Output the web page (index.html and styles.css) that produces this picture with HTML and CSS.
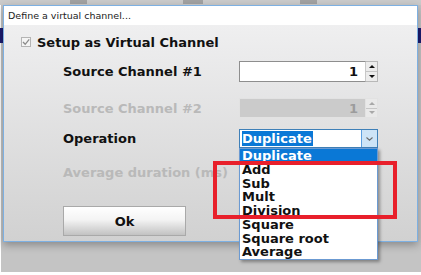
FILE: index.html
```html
<!DOCTYPE html>
<html lang="en">
<head>
  <meta charset="UTF-8">
  <title>Define a virtual channel</title>
  <link rel="stylesheet" href="styles.css">
</head>
<body>
<div class="screen">
  <div class="backdrop-top"></div>

  <div class="dialog">
    <div class="titlebar">Define a virtual channel...</div>
    <div class="client">
      <label class="check-row">
        <span class="checkbox">
          <svg width="10" height="10" viewBox="0 0 10 10"><polyline points="2,5 4.2,7.3 8.2,2.4" fill="none" stroke="#8a8a8a" stroke-width="1.3"/></svg>
        </span>
        Setup as Virtual Channel
      </label>

      <div class="field row-src1">
        <span class="label">Source Channel #1</span>
        <div class="spin">
          <div class="spin-text">1</div>
          <div class="spin-btns">
            <span class="arrow-up"></span>
            <span class="arrow-down"></span>
          </div>
        </div>
      </div>

      <div class="field row-src2 disabled">
        <span class="label">Source Channel #2</span>
        <div class="spin">
          <div class="spin-text">1</div>
          <div class="spin-btns">
            <span class="arrow-up"></span>
            <span class="arrow-down"></span>
          </div>
        </div>
      </div>

      <div class="field row-op">
        <span class="label">Operation</span>
        <div class="combo">
          <div class="combo-text"><span class="sel">Duplicate</span></div>
          <div class="combo-btn">
            <svg width="9" height="6" viewBox="0 0 9 6"><polyline points="1.5,1.5 4.5,4.2 7.5,1.5" fill="none" stroke="#6a6a6a" stroke-width="1.1"/></svg>
          </div>
        </div>
      </div>

      <div class="field row-avg disabled">
        <span class="label">Average duration (ms)</span>
      </div>

      <button class="ok-btn">Ok</button>
    </div>
  </div>

  <!-- open dropdown of the Operation combo -->
  <ul class="droplist">
    <li class="active">Duplicate</li>
    <li>Add</li>
    <li>Sub</li>
    <li>Mult</li>
    <li>Division</li>
    <li>Square</li>
    <li>Square root</li>
    <li>Average</li>
  </ul>

  <!-- red annotation frame -->
  <div class="mark-box"></div>
</div>
</body>
</html>
```

FILE: styles.css
```css
body {
  margin: 0;
  font-family: "DejaVu Sans", sans-serif;
}

.screen {
  position: relative;
  width: 421px;
  height: 275px;
  overflow: hidden;
  background:
    linear-gradient(#1b1b70, #1b1b70) 0 28px / 421px 15px no-repeat,
    linear-gradient(#ffffff, #ffffff) 0 272px / 421px 3px no-repeat,
    linear-gradient(#ffffff, #ffffff) 0 0 / 1px 275px no-repeat,
    #c4c4c4;
}

.backdrop-top {
  height: 5px;
  background:
    linear-gradient(#a2a2a2, #a2a2a2) 70px 0 / 17px 4px no-repeat,
    linear-gradient(#a2a2a2, #a2a2a2) 183px 0 / 20px 4px no-repeat,
    linear-gradient(#a2a2a2, #a2a2a2) 300px 0 / 17px 4px no-repeat,
    #cbcbcb;
}

.dialog {
  margin-left: 3px;
  width: 415px;
  box-sizing: border-box;
  border: 1px solid #7db0e2;
  box-shadow: 0 3px 8px rgba(0, 0, 0, 0.3);
}

.titlebar {
  height: 19px;
  background: #ffffff;
  font-size: 9.5px;
  line-height: 19px;
  padding-left: 4px;
  color: #222;
}

.client {
  height: 216px;
  box-sizing: border-box;
  background: linear-gradient(#efeff0, #d1d1d1);
  display: flex;
  flex-direction: column;
  font-size: 13px;
  font-weight: bold;
  color: #111;
}

.check-row {
  display: flex;
  align-items: center;
  gap: 6px;
  height: 12px;
  margin-top: 11px;
  padding-left: 17px;
}

.checkbox {
  width: 10px;
  height: 10px;
  box-sizing: border-box;
  border: 1px solid #b4b4b4;
  background: #f4f4f4;
  display: flex;
}

.checkbox svg {
  margin: -1px;
}

.field {
  display: flex;
  align-items: center;
  padding-left: 59px;
}

.label {
  width: 176px;
  white-space: nowrap;
}

.row-src1 { margin-top: 13px; height: 21px; }
.row-src2 { margin-top: 16px; height: 20px; }
.row-op   { margin-top: 11px; height: 19px; }
.row-avg  { margin-top: 14px; height: 20px; }

.disabled .label {
  color: #b9b9b9;
}

.spin {
  display: flex;
  height: 100%;
}

.spin-text {
  width: 127px;
  box-sizing: border-box;
  border: 1px solid #8e8e8e;
  border-right-color: #c8c8c8;
  background: #ffffff;
  text-align: right;
  padding-right: 7px;
  line-height: 19px;
}

.spin-btns {
  width: 11px;
  display: flex;
  flex-direction: column;
  border: 1px solid #b8b8b8;
  border-left: none;
  background: #ececec;
}

.spin-btns span {
  flex: 1;
  display: flex;
  align-items: center;
  justify-content: center;
}

.arrow-up {
  border-bottom: 1px solid #c6c6c6;
}

.arrow-up::before,
.arrow-down::before {
  content: "";
  border-left: 3px solid transparent;
  border-right: 3px solid transparent;
}

.arrow-up::before {
  border-bottom: 3px solid #111;
}

.arrow-down::before {
  border-top: 3px solid #111;
}

.disabled .spin-text {
  background: #cbcbcb;
  border-color: #e2e2e2;
  color: #9c9c9c;
}

.disabled .spin-btns {
  border-color: #e2e2e2;
  background: #e9e9e9;
}

.disabled .arrow-up::before { border-bottom-color: #a8a8a8; }
.disabled .arrow-down::before { border-top-color: #a8a8a8; }

.combo {
  display: flex;
  width: 139px;
  height: 100%;
  box-sizing: border-box;
  border: 1px solid #3f80b8;
  background: #ffffff;
}

.combo-text {
  flex: 1;
  padding-left: 2px;
  display: flex;
  align-items: center;
}

.sel {
  background: #0a78d6;
  color: #ffffff;
  line-height: 15px;
  padding-right: 1px;
}

.combo-btn {
  width: 15px;
  background: #cde4f7;
  border-left: 1px solid #5c9fe0;
  display: flex;
  align-items: center;
  justify-content: center;
}

.ok-btn {
  margin-top: 24px;
  margin-left: 59px;
  width: 123px;
  height: 30px;
  border: 1px solid #a9a9a9;
  background: linear-gradient(#ffffff 0%, #f4f4f4 45%, #c2c2c2 100%);
  font-family: "DejaVu Sans", sans-serif;
  font-size: 13px;
  font-weight: bold;
  color: #111;
  padding: 0;
}

.droplist {
  position: absolute;
  left: 239px;
  top: 148px;
  width: 139px;
  height: 112px;
  box-sizing: border-box;
  margin: 0;
  padding: 0;
  list-style: none;
  background: #ffffff;
  border: 1px solid #6b9ad2;
  box-shadow: 2px 2px 3px rgba(0, 0, 0, 0.35);
  font-size: 13px;
  font-weight: bold;
  color: #111;
}

.droplist li {
  height: 13.75px;
  line-height: 13.75px;
  padding-left: 2px;
  white-space: nowrap;
}

.droplist li.active {
  background: #0a78d6;
  color: #ffffff;
}

.mark-box {
  position: absolute;
  left: 213px;
  top: 161px;
  width: 184px;
  height: 58px;
  box-sizing: border-box;
  border: 4px solid #e8202b;
}
```
